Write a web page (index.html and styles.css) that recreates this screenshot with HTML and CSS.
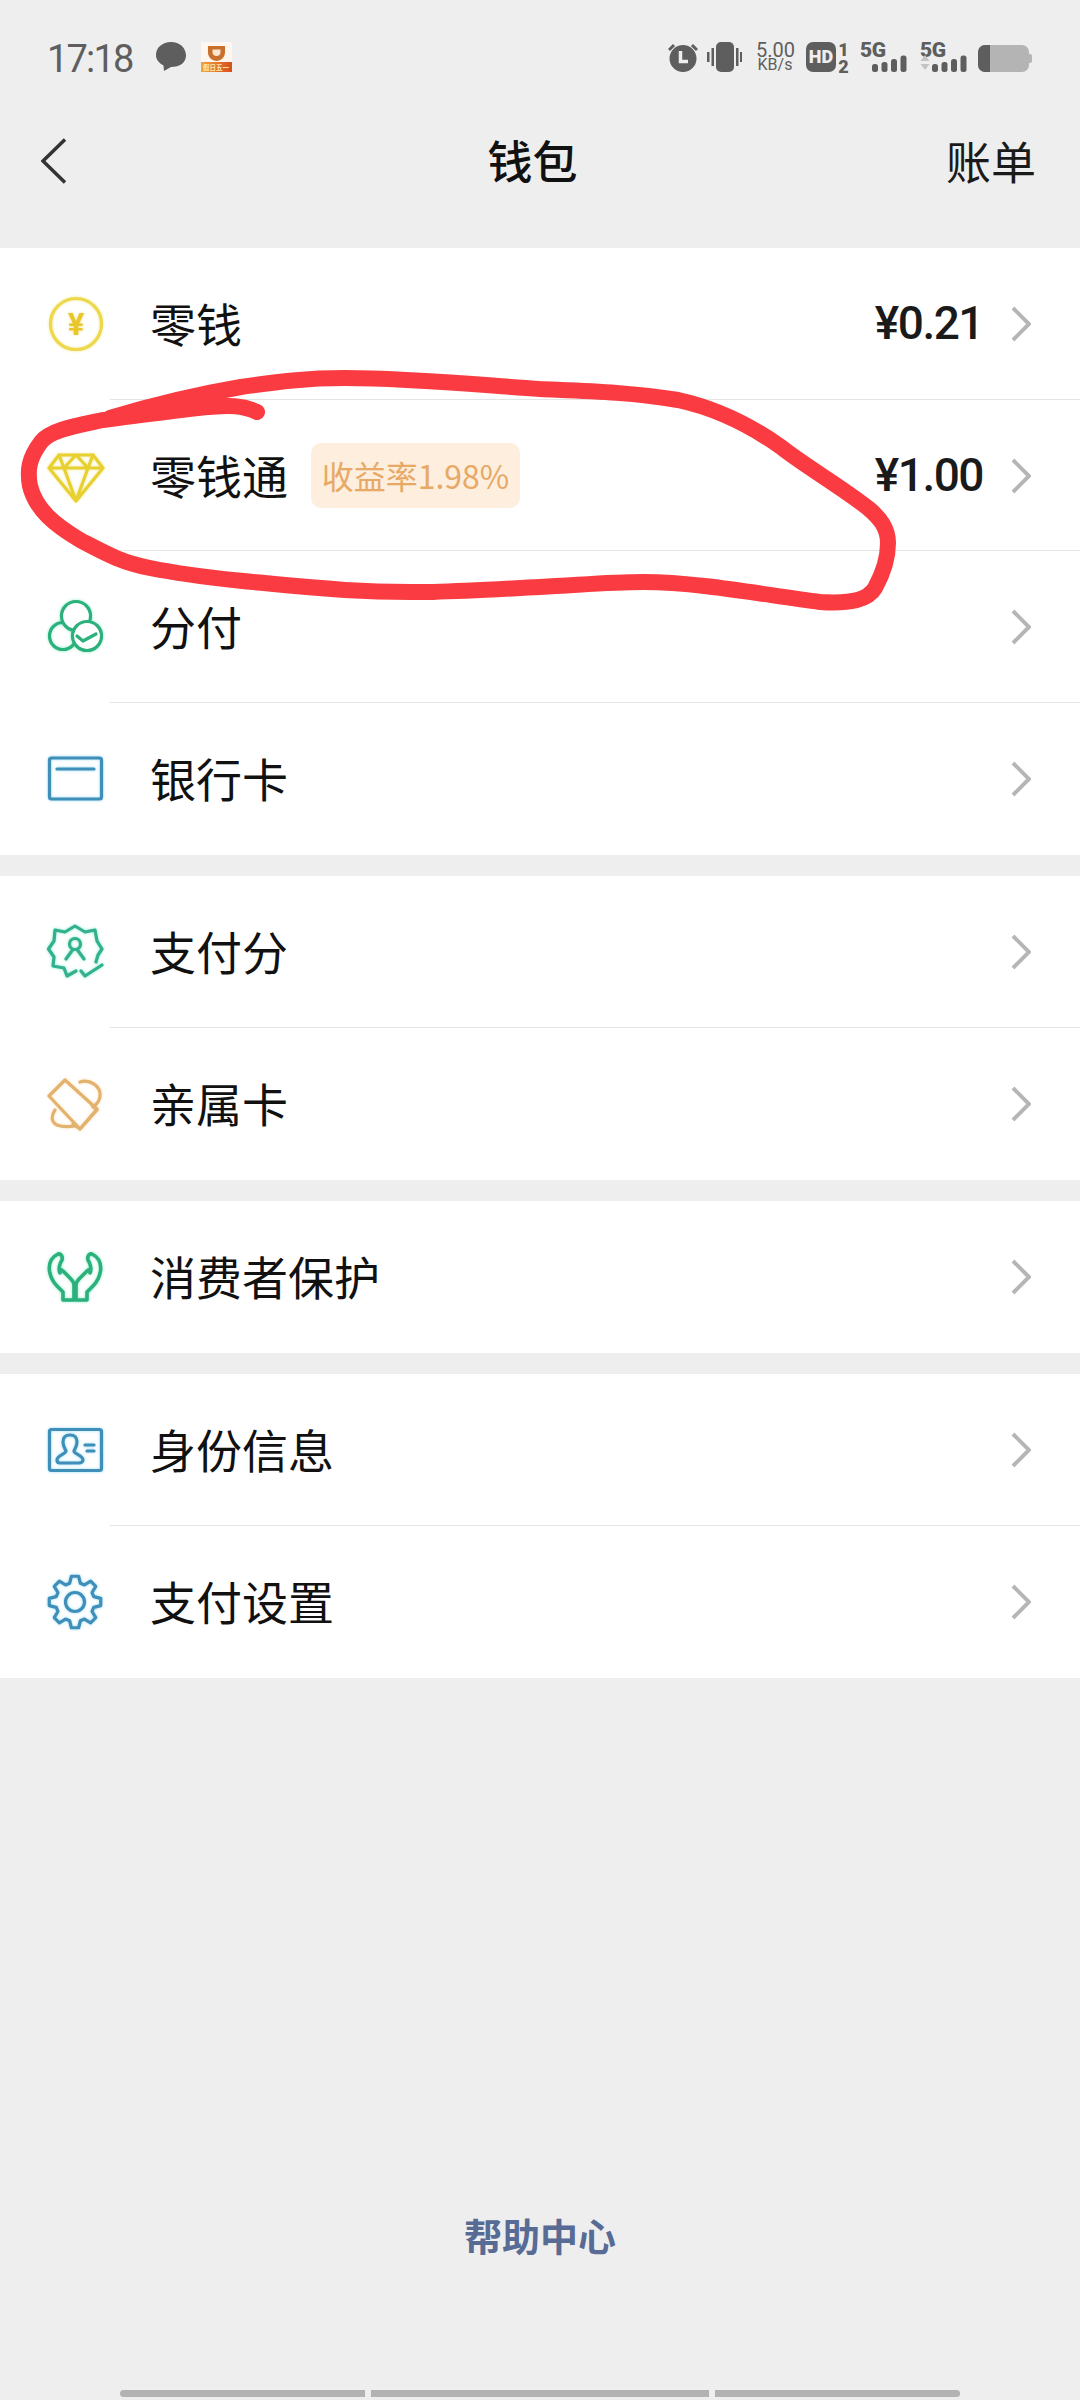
FILE: index.html
```html
<!DOCTYPE html>
<html lang="zh">
<head>
<meta charset="utf-8">
<title>钱包</title>
<link rel="stylesheet" href="styles.css">
</head>
<body>
<div class="screen">
  <header class="status">
    <div class="status-left">
      <span class="time">17:18</span>
      <svg class="bubble" viewBox="0 0 30 30"><path d="M15 0C23.500 0 30 5.800 30 13.500C30 20.500 24 25 15 25L8 29L7.500 23.500C3 21 0 17.500 0 13C0 5.500 6.500 0 15 0Z"/></svg>
      <div class="app-icon">
        <svg class="app-cup" viewBox="0 0 19 17"><path d="M1 1H18V7C18 12.500 14 16 9.500 16C5 16 1 12.500 1 7Z" fill="#c8702c"/><path d="M5.500 4.500H13.500V7C13.500 9.500 12 11 9.500 11C7 11 5.500 9.500 5.500 7Z" fill="#fbe6cf"/></svg>
        <span class="app-label">假日五一</span>
      </div>
    </div>
    <div class="status-right">
      <svg class="st alarm" viewBox="0 0 30 30"><circle cx="15" cy="16.500" r="13.500"/><path d="M1 8L6 3M29 8L24 3" class="st-line"/><path d="M12.500 9V19.500H20" class="st-cut"/></svg>
      <svg class="st vibrate" viewBox="0 0 35 30"><rect x="9" y="0" width="18" height="30" rx="5"/><rect x="0" y="10" width="2.500" height="10"/><rect x="4.500" y="6" width="2.500" height="18"/><rect x="29" y="6" width="2.500" height="18"/><rect x="33" y="10" width="2" height="10"/></svg>
      <div class="speed">5.00 KB/s</div>
      <div class="hd-group">
        <span class="hd">HD</span>
        <div class="sim-nums"><span>1</span><span>2</span></div>
      </div>
      <div class="signal">
        <span class="g5">5G</span>
        <svg class="bars" viewBox="0 0 35 17"><rect x="0" y="9" width="6" height="8" rx="2.500"/><rect x="9.500" y="7" width="6" height="10" rx="2.500"/><rect x="19" y="4" width="6" height="13" rx="2.500"/><rect x="28.500" y="0.500" width="6" height="16.500" rx="2.500"/></svg>
      </div>
      <div class="signal signal-2">
        <span class="g5">5G</span>
        <svg class="bars bars-2" viewBox="0 0 47 17"><path d="M5 0L9.500 6H0.500Z" fill="#c4c4c4"/><path d="M0.500 9H9.500L5 15Z" fill="#c4c4c4"/><rect x="12" y="9" width="6" height="8" rx="2.500"/><rect x="21.500" y="7" width="6" height="10" rx="2.500"/><rect x="31" y="4" width="6" height="13" rx="2.500"/><rect x="40.500" y="0.500" width="6" height="16.500" rx="2.500"/></svg>
      </div>
      <div class="battery"><span class="battery-fill"></span><span class="battery-cap"></span></div>
    </div>
  </header>

  <nav class="nav">
    <svg class="nav-back" viewBox="0 0 26 46"><path d="M24 1.500L2 23L24 44.500"/></svg>
    <h1 class="nav-title">钱包</h1>
    <span class="nav-action">账单</span>
  </nav>

  <main class="list">
    <section class="group">
      <div class="row">
        <svg class="ico ico-yellow" viewBox="0 0 56 56"><circle cx="28" cy="28" r="25.500"/><text x="28" y="39" class="yen">¥</text></svg>
        <span class="label">零钱</span>
        <span class="amount">¥0.21</span>
        <svg class="chev" viewBox="0 0 20 36"><path d="M2 2L18 18L2 34"/></svg>
      </div>
      <div class="row">
        <svg class="ico ico-gold" viewBox="0 0 56 56"><path d="M11 7H45L55 20L28 53L1 20ZM1 20H55M11 7L16 20L28 53L40 20L45 7M16 20L28 7L40 20"/></svg>
        <span class="label">零钱通</span>
        <span class="badge">收益率1.98%</span>
        <span class="amount">¥1.00</span>
        <svg class="chev" viewBox="0 0 20 36"><path d="M2 2L18 18L2 34"/></svg>
      </div>
      <div class="row">
        <svg class="ico ico-green" viewBox="0 0 56 56"><circle cx="15" cy="37" r="13.500"/><circle cx="28" cy="17" r="14.500" class="fill-white"/><circle cx="39" cy="37" r="14.500" class="fill-white"/><path d="M29 37L35 42L48 35"/></svg>
        <span class="label">分付</span>
        <svg class="chev" viewBox="0 0 20 36"><path d="M2 2L18 18L2 34"/></svg>
      </div>
      <div class="row">
        <svg class="ico ico-blue" viewBox="0 0 56 56"><rect x="1.500" y="7" width="52" height="41" rx="2"/><path d="M9 18H46"/></svg>
        <span class="label">银行卡</span>
        <svg class="chev" viewBox="0 0 20 36"><path d="M2 2L18 18L2 34"/></svg>
      </div>
    </section>

    <section class="group">
      <div class="row">
        <svg class="ico ico-teal" viewBox="0 0 56 56"><path d="M48 38L50 31L54 25L49 17L47 6L37 8L27 2L17 8L7 6L6 17L0.500 25L6 33L5 42L16 44L19 52L28 47"/><circle cx="27" cy="20" r="5.500"/><path d="M18 35L24.500 26M36 35L29.500 26M33 47L37 52L54 41"/></svg>
        <span class="label">支付分</span>
        <svg class="chev" viewBox="0 0 20 36"><path d="M2 2L18 18L2 34"/></svg>
      </div>
      <div class="row">
        <svg class="ico ico-orange" viewBox="0 0 56 56"><path d="M17 4L49 33L32 53L1 20Z"/><path d="M44 29L49 34L32 53L25 48"/><path d="M32 6C42 3 53 10 52 20C52 24 49 28 45 31M7 34C3 40 3 46 9 49C14 51 20 51 27 50"/></svg>
        <span class="label">亲属卡</span>
        <svg class="chev" viewBox="0 0 20 36"><path d="M2 2L18 18L2 34"/></svg>
      </div>
    </section>

    <section class="group">
      <div class="row">
        <svg class="ico ico-green ico-thick" viewBox="0 0 56 56"><path d="M10 5C4 8 0.500 14 1.500 22C2.500 28 5 33 9 37L15 43V51H26V36C26 33 24 31 22 29L15 22C13 20 12 21 12 23V24C10 20 12 14 14 11C15 8 13 4 10 5Z"/><path d="M44 5C50 8 53.500 14 52.500 22C51.500 28 49 33 45 37L39 43V51H28V36C28 33 30 31 32 29L39 22C41 20 42 21 42 23V24C44 20 42 14 40 11C39 8 41 4 44 5Z"/></svg>
        <span class="label">消费者保护</span>
        <svg class="chev" viewBox="0 0 20 36"><path d="M2 2L18 18L2 34"/></svg>
      </div>
    </section>

    <section class="group">
      <div class="row">
        <svg class="ico ico-blue" viewBox="0 0 56 56"><rect x="1.500" y="7.500" width="52" height="41" rx="2"/><path d="M15 20C15 15 18 13 22 13C26 13 29 15 29 20C29 24 27 27 26 29C26 32 35 33 35 38C35 40 33 41 31 41H12C10 41 9 40 9 38C9 33 18 32 18 29C17 27 15 24 15 20Z"/><path d="M37 23H46M39 29H46"/></svg>
        <span class="label">身份信息</span>
        <svg class="chev" viewBox="0 0 20 36"><path d="M2 2L18 18L2 34"/></svg>
      </div>
      <div class="row">
        <svg class="ico ico-blue" viewBox="0 0 56 56"><g transform="translate(27 28)"><path d="M-5.370 -18.740L-3.620 -25.750L3.620 -25.750L5.370 -18.740L9.450 -17.050L15.650 -20.770L20.770 -15.650L17.050 -9.450L18.740 -5.370L25.750 -3.620L25.750 3.620L18.740 5.370L17.050 9.450L20.770 15.650L15.650 20.770L9.450 17.050L5.370 18.740L3.620 25.750L-3.620 25.750L-5.370 18.740L-9.450 17.050L-15.650 20.770L-20.770 15.650L-17.050 9.450L-18.740 5.370L-25.750 3.620L-25.750 -3.620L-18.740 -5.370L-17.050 -9.450L-20.770 -15.650L-15.650 -20.770L-9.450 -17.050Z"/><circle r="9.500"/></g></svg>
        <span class="label">支付设置</span>
        <svg class="chev" viewBox="0 0 20 36"><path d="M2 2L18 18L2 34"/></svg>
      </div>
    </section>
  </main>

  <footer class="footer">
    <a class="help">帮助中心</a>
    <div class="home-bars"><span class="hb hb-a"></span><span class="hb hb-b"></span><span class="hb hb-c"></span></div>
  </footer>

  <svg class="scribble" viewBox="0 0 1080 700"><path d="M257 412C240 404 225 406 207 407C170 411 135 416 103 420C75 426 50 430 41 442C29 458 27 470 30 486C36 510 55 525 80 540C105 553 120 562 150 568C200 578 270 584 345 590C420 595 480 590 540 587C580 585 610 582 643 582C700 582 770 596 820 602C850 604 868 600 875 588C885 570 888 555 888 543C888 528 880 518 868 508C840 486 805 466 781 447C750 425 715 408 678 400C630 392 585 391 540 389C480 385 410 378 345 378C300 378 270 383 241 387C200 394 150 406 110 418"/></svg>
</div>
</body>
</html>
```
FILE: styles.css
```css
* { box-sizing: border-box; }
html, body { margin: 0; padding: 0; }
body {
  width: 1080px;
  height: 2400px;
  background: #eeeeee;
  font-family: "Noto Sans CJK SC", "Roboto", sans-serif;
  overflow: hidden;
}
.screen { position: relative; width: 1080px; height: 2400px; display: flex; flex-direction: column; }

/* status bar */
.status { height: 108px; padding: 42px 48px 0 47px; display: flex; justify-content: space-between; align-items: flex-start; color: #5e5e5e; }
.status-left { display: flex; align-items: center; height: 30px; }
.time { font-family: "Roboto", sans-serif; font-size: 38px; line-height: 30px; letter-spacing: -1.800px; width: 87px; margin-right: 22px; margin-top: 3px; }
.bubble { width: 30px; height: 30px; fill: #5e5e5e; margin-right: 15px; }
.app-icon { width: 31px; height: 30px; background: #fff7ef; position: relative; display: flex; justify-content: center; padding-top: 3px; }
.app-cup { width: 19px; height: 17px; }
.app-label { position: absolute; left: 0; right: 0; bottom: 0; height: 10px; padding-left: 2px; background: linear-gradient(to right, #eea63e, #d84e1c); font-size: 6.500px; line-height: 10px; color: #ffe7a8; white-space: nowrap; font-weight: 700; }
.status-right { display: flex; align-items: flex-start; height: 30px; }
.st { display: block; height: 30px; fill: #5e5e5e; }
.alarm { width: 30px; margin-right: 9px; }
.st-line { fill: none; stroke: #5e5e5e; stroke-width: 3; }
.st-cut { fill: none; stroke: #eeeeee; stroke-width: 3.500; }
.vibrate { width: 35px; margin-right: 14px; }
.speed { width: 38px; height: 30px; margin-right: 12px; font-family: "Roboto", sans-serif; font-size: 16px; line-height: 14px; text-align: center; color: #5e5e5e; }
.speed::first-line { font-size: 20px; line-height: 16px; }
.hd-group { display: flex; width: 44px; margin-right: 10px; }
.hd { width: 30px; height: 30px; background: #5e5e5e; color: #eeeeee; border-radius: 7px; font: 900 18px/30px "Roboto", sans-serif; text-align: center; }
.sim-nums { display: flex; flex-direction: column; width: 11px; margin-left: 2px; font: 900 18px/15px "Roboto", sans-serif; color: #5e5e5e; text-align: center; gap: 2px; }
.signal { position: relative; width: 47px; height: 30px; margin-right: 13px; }
.signal-2 { width: 48px; margin-right: 10px; }
.g5 { position: absolute; left: 0; top: -2px; font: 900 21px/20px "Roboto", sans-serif; letter-spacing: -0.500px; color: #5e5e5e; }
.bars { position: absolute; right: 0; bottom: 0; width: 35px; height: 17px; fill: #5e5e5e; }
.bars-2 { width: 47px; right: 1px; }
.battery { position: relative; width: 51px; height: 27px; margin-top: 3px; margin-right: 3px; background: #b4b4b4; border-radius: 7px; }
.battery-fill { display: block; width: 12px; height: 27px; background: #5e5e5e; border-radius: 7px 0 0 7px; }
.battery-cap { position: absolute; right: -3px; top: 9px; width: 3px; height: 9px; background: #b4b4b4; border-radius: 0 2px 2px 0; }

/* nav */
.nav { height: 140px; display: flex; align-items: flex-start; padding: 30px 44px 0 41px; position: relative; justify-content: space-between; }
.nav-back { width: 26px; height: 46px; fill: none; stroke: #333333; stroke-width: 3.500; }
.nav-title { position: absolute; left: 0; right: 15px; top: 22px; margin: 0; text-align: center; font-size: 45px; line-height: 60px; font-weight: 500; color: #111111; pointer-events: none; }
.nav-action { font-size: 45px; line-height: 60px; color: #1a1a1a; font-weight: 400; margin-top: -7px; }

/* list */
.list { display: flex; flex-direction: column; gap: 21.500px; }
.group { background: #ffffff; }
.row { height: 151.700px; display: flex; align-items: center; padding: 0 49px 0 48px; position: relative; }
.row + .row::before { content: ""; position: absolute; left: 110px; right: 0; top: -1px; height: 1px; background: #e4e4e4; }
.ico { width: 56px; height: 56px; flex: none; fill: none; stroke-width: 3.200; stroke-linejoin: round; stroke-linecap: round; overflow: visible; }
.ico-yellow { stroke: #ecd84a; filter: drop-shadow(0 0 1.500px rgba(240, 224, 110, 0.7)); }
.ico-gold { stroke: #e8d030; filter: drop-shadow(0 0 1.500px rgba(240, 224, 110, 0.7)); }
.ico-green { stroke: #2cb07c; filter: drop-shadow(0 0 1.500px rgba(60, 220, 160, 0.6)); }
.ico-thick { stroke-width: 3.600; }
.ico-teal { stroke: #33b08e; filter: drop-shadow(0 0 1.500px rgba(60, 220, 170, 0.6)); }
.ico-blue { stroke: #3f8fb9; filter: drop-shadow(0 0 1.500px rgba(90, 200, 240, 0.6)); }
.ico-orange { stroke: #e3b26f; filter: drop-shadow(0 0 1.500px rgba(250, 210, 140, 0.6)); }
.fill-white { fill: #ffffff; }
.yen { font: 700 31px "Roboto", sans-serif; fill: #e9c62b; stroke: none; text-anchor: middle; }
.label { margin: 0 0 4px 46px; font-size: 46px; line-height: 60px; color: #111111; }
.badge { margin-left: 23px; height: 65px; width: 209px; background: #fdeedd; border-radius: 10px; color: #e7a965; font-size: 32px; line-height: 65px; text-align: center; white-space: nowrap; }
.amount { margin: 0 28px 2px auto; font-family: "Roboto", sans-serif; font-size: 46px; letter-spacing: -1.500px; font-weight: 500; line-height: 60px; color: #1a1a1a; }
.chev { flex: none; width: 20px; height: 36px; fill: none; stroke: #b6b6b6; stroke-width: 4; }
.row > .label + .chev { margin-left: auto; }

/* footer */
.footer { flex: 1; position: relative; }
.help { position: absolute; left: 0; right: 0; top: 532px; text-align: center; font-size: 38px; line-height: 50px; font-weight: 700; color: #576b95; }
.home-bars { position: absolute; left: 120px; bottom: 3px; display: flex; gap: 6px; }
.hb { display: block; height: 7px; background: #b3b3b3; }
.hb-a { width: 245px; border-radius: 4px 0 0 4px; }
.hb-b { width: 338px; }
.hb-c { width: 245px; border-radius: 0 4px 4px 0; }

/* hand-drawn annotation over the page */
.scribble { position: absolute; left: 0; top: 0; width: 1080px; height: 700px; fill: none; stroke: #fa3c42; stroke-width: 16; stroke-linecap: round; stroke-linejoin: round; pointer-events: none; }
```
